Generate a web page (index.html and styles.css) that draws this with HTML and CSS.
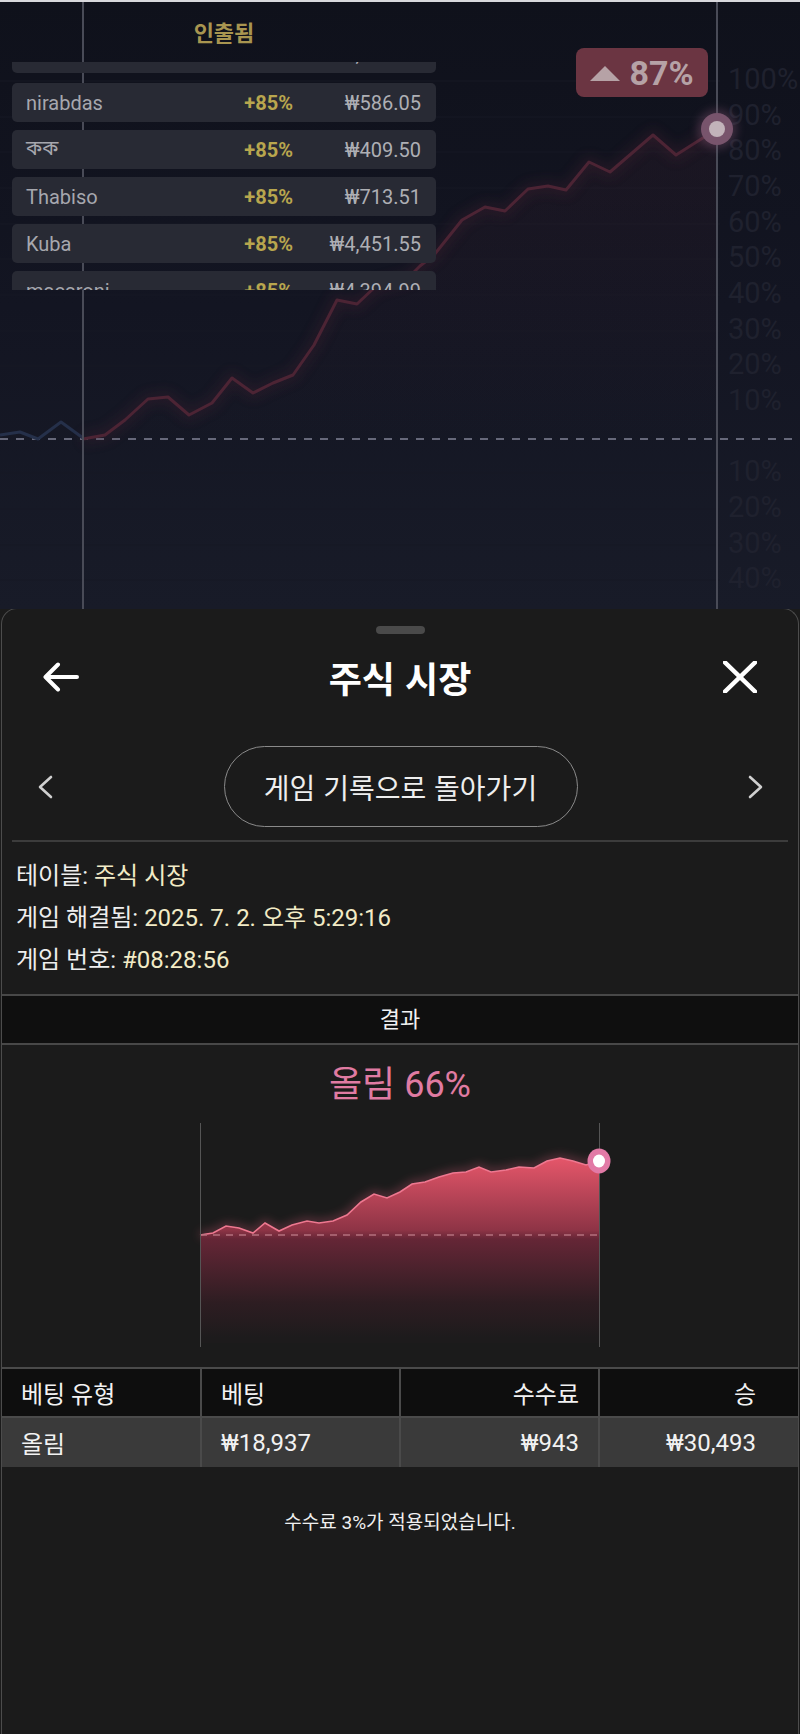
FILE: index.html
```html
<!DOCTYPE html>
<html lang="ko">
<head>
<meta charset="utf-8">
<title>주식 시장</title>
<link rel="stylesheet" href="styles.css">
</head>
<body>
<div class="game">
  <svg class="game-chart" viewBox="0 2 800 607" width="800" height="607">
    <defs>
      <filter id="blur6" x="-20%" y="-20%" width="140%" height="140%"><feGaussianBlur stdDeviation="6"/></filter>
      <filter id="blur3" x="-50%" y="-50%" width="200%" height="200%"><feGaussianBlur stdDeviation="4"/></filter>
      <linearGradient id="bgfill" x1="0" y1="129" x2="0" y2="439" gradientUnits="userSpaceOnUse">
        <stop offset="0" stop-color="#5a2a3a" stop-opacity="0.14"/>
        <stop offset="1" stop-color="#5a2a3a" stop-opacity="0"/>
      </linearGradient>
    </defs>
    <g class="grid">
      <line x1="0" y1="81" x2="720" y2="81"/><line x1="0" y1="117" x2="720" y2="117"/>
      <line x1="0" y1="152" x2="720" y2="152"/><line x1="0" y1="188" x2="720" y2="188"/>
      <line x1="0" y1="224" x2="720" y2="224"/><line x1="0" y1="259" x2="720" y2="259"/>
      <line x1="0" y1="295" x2="720" y2="295"/><line x1="0" y1="331" x2="720" y2="331"/>
      <line x1="0" y1="366" x2="720" y2="366"/><line x1="0" y1="402" x2="720" y2="402"/>
      <line x1="0" y1="473" x2="720" y2="473"/><line x1="0" y1="509" x2="720" y2="509"/>
      <line x1="0" y1="545" x2="720" y2="545"/><line x1="0" y1="580" x2="720" y2="580"/>
    </g>
    <g class="axis">
      <text x="728" y="81">100%</text><text x="728" y="117">90%</text>
      <text x="728" y="152">80%</text><text x="728" y="188">70%</text>
      <text x="728" y="224">60%</text><text x="728" y="259">50%</text>
      <text x="728" y="295">40%</text><text x="728" y="331">30%</text>
      <text x="728" y="366">20%</text><text x="728" y="402">10%</text>
      <text x="728" y="473">10%</text><text x="728" y="509">20%</text>
      <text x="728" y="545">30%</text><text x="728" y="580">40%</text>
    </g>
    <polygon fill="url(#bgfill)" points="83,439 105,435 125,420 148,399 168,397 189,415 212,403 232,378 253,393 273,383 293,375 314,345 337,300 357,304 375,287 408,278 420,266 434,255 462,220 485,207 505,211 528,189 548,186 566,190 589,162 610,172 653,135 676,155 717,129 717,439"/>
    <line class="zero" x1="0" y1="439" x2="800" y2="439"/>
    <polyline class="pre-line" points="0,435 20,432 38,439 61,422 83,438"/>
    <polyline class="up-glow" filter="url(#blur6)" points="83,439 105,435 125,420 148,399 168,397 189,415 212,403 232,378 253,393 273,383 293,375 314,345 337,300 357,304 375,287 408,278 420,266 434,255 462,220 485,207 505,211 528,189 548,186 566,190 589,162 610,172 653,135 676,155 717,129"/>
    <polyline class="up-line" points="83,439 105,435 125,420 148,399 168,397 189,415 212,403 232,378 253,393 273,383 293,375 314,345 337,300 357,304 375,287 408,278 420,266 434,255 462,220 485,207 505,211 528,189 548,186 566,190 589,162 610,172 653,135 676,155 717,129"/>
    <line class="vline" x1="83" y1="2" x2="83" y2="609"/>
    <line class="vline" x1="717" y1="2" x2="717" y2="609"/>
    <circle cx="717" cy="129" r="20" fill="#8a5a78" opacity="0.35" filter="url(#blur3)"/>
    <circle cx="717" cy="129" r="16" fill="#78546c"/>
    <circle cx="717" cy="129" r="8" fill="#c2b3ba"/>
  </svg>

  <div class="cashout">
    <div class="cashout-title">인출됨</div>
    <div class="cashout-clip">
      <ul class="cashout-list">
        <li class="row"><span class="name">Jin</span><span class="mult">+85%</span><span class="amt">₩1,204.30</span></li>
        <li class="row"><span class="name">nirabdas</span><span class="mult">+85%</span><span class="amt">₩586.05</span></li>
        <li class="row"><span class="name bn">কক</span><span class="mult">+85%</span><span class="amt">₩409.50</span></li>
        <li class="row"><span class="name">Thabiso</span><span class="mult">+85%</span><span class="amt">₩713.51</span></li>
        <li class="row"><span class="name">Kuba</span><span class="mult">+85%</span><span class="amt">₩4,451.55</span></li>
        <li class="row"><span class="name">macaroni</span><span class="mult">+85%</span><span class="amt">₩4,394.99</span></li>
      </ul>
    </div>
  </div>

  <div class="badge">
    <svg class="badge-tri" width="30" height="15" viewBox="0 0 30 15"><polygon points="0,15 30,15 15,0" fill="#b6a2a6"/></svg>
    <span>87%</span>
  </div>
</div>

<div class="sheet">
  <div class="handle"></div>
  <div class="sheet-header">
    <svg class="icon-back" width="36" height="30" viewBox="0 0 36 30"><path d="M34 15 H3 M15 2.5 L2.5 15 L15 27.5" fill="none" stroke="#fff" stroke-width="4" stroke-linecap="round" stroke-linejoin="round"/></svg>
    <h1 class="sheet-title">주식 시장</h1>
    <svg class="icon-close" width="34" height="32" viewBox="0 0 34 32"><path d="M2 1.5 L32 30.5 M32 1.5 L2 30.5" fill="none" stroke="#fff" stroke-width="4.5" stroke-linecap="round"/></svg>
  </div>
  <div class="nav-row">
    <svg class="chev chev-left" width="16" height="24" viewBox="0 0 16 24"><path d="M14 2 L3 12 L14 22" fill="none" stroke="#d0d0d0" stroke-width="2.6" stroke-linecap="round" stroke-linejoin="round"/></svg>
    <button class="pill">게임 기록으로 돌아가기</button>
    <svg class="chev chev-right" width="16" height="24" viewBox="0 0 16 24"><path d="M2 2 L13 12 L2 22" fill="none" stroke="#d0d0d0" stroke-width="2.6" stroke-linecap="round" stroke-linejoin="round"/></svg>
  </div>
  <div class="divider"></div>
  <div class="info">
    <p>테이블: <span class="val">주식 시장</span></p>
    <p>게임 해결됨: <span class="val">2025. 7. 2. 오후 5:29:16</span></p>
    <p>게임 번호: <span class="val">#08:28:56</span></p>
  </div>
  <div class="result-head">결과</div>
  <div class="result-body">
    <div class="result-title">올림 66%</div>
    <svg class="result-chart" width="400" height="224" viewBox="0 0 400 224">
      <defs>
        <linearGradient id="area" x1="0" y1="35" x2="0" y2="215" gradientUnits="userSpaceOnUse">
          <stop offset="0" stop-color="#e5566a"/>
          <stop offset="0.4" stop-color="#8e3446"/>
          <stop offset="0.45" stop-color="#652636"/>
          <stop offset="0.8" stop-color="#2e1d22"/>
          <stop offset="1" stop-color="#1d1b1c"/>
        </linearGradient>
        <filter id="mglow" x="-20%" y="-50%" width="140%" height="200%"><feGaussianBlur stdDeviation="5"/></filter>
      </defs>
      <polyline filter="url(#mglow)" fill="none" stroke="#e0607e" stroke-width="5" opacity="0.45" points="0,112 13,110 26,103 39,105 53,110 65,100 79,108 92,102 107,98 119,100 133,98 147,92 161,79 174,71 187,75 200,69 212,61 225,59 239,54 253,50 266,49 279,44 291,49 306,47 319,44 334,45 347,38 360,35 373,38 386,42 399,38"/>
      <polygon fill="url(#area)" points="0,112 13,110 26,103 39,105 53,110 65,100 79,108 92,102 107,98 119,100 133,98 147,92 161,79 174,71 187,75 200,69 212,61 225,59 239,54 253,50 266,49 279,44 291,49 306,47 319,44 334,45 347,38 360,35 373,38 386,42 399,38 399,220 0,220"/>
      <polyline fill="none" stroke="#ee7890" stroke-width="1.6" points="0,112 13,110 26,103 39,105 53,110 65,100 79,108 92,102 107,98 119,100 133,98 147,92 161,79 174,71 187,75 200,69 212,61 225,59 239,54 253,50 266,49 279,44 291,49 306,47 319,44 334,45 347,38 360,35 373,38 386,42 399,38"/>
      <line x1="0" y1="112" x2="399" y2="112" stroke="#b4707e" stroke-width="1.5" stroke-dasharray="7 6"/>
      <line x1="0.5" y1="0" x2="0.5" y2="224" stroke="#555" stroke-width="1"/>
      <line x1="399.5" y1="0" x2="399.5" y2="224" stroke="#555" stroke-width="1"/>
      <ellipse cx="399" cy="38" rx="11.5" ry="12.5" fill="#e27aa6"/>
      <ellipse cx="399" cy="38" rx="6" ry="6.5" fill="#ffffff"/>
    </svg>
  </div>
  <table class="bets">
    <thead>
      <tr><th class="l">베팅 유형</th><th class="l">베팅</th><th class="r">수수료</th><th class="r last">승</th></tr>
    </thead>
    <tbody>
      <tr><td class="l">올림</td><td class="l">₩18,937</td><td class="r">₩943</td><td class="r last">₩30,493</td></tr>
    </tbody>
  </table>
  <p class="note">수수료 3%가 적용되었습니다.</p>
</div>
</body>
</html>
```
FILE: styles.css
```css
* { box-sizing: border-box; }
html, body { margin: 0; padding: 0; }
body {
  width: 800px;
  height: 1734px;
  overflow: hidden;
  background: #1b1b1b;
  font-family: Roboto, "Noto Sans CJK KR", sans-serif;
  color: #eeeeee;
}

/* ---------- game background (dimmed) ---------- */
.game {
  position: relative;
  height: 609px;
  border-top: 2px solid #d8d8dc;
  background: linear-gradient(180deg, #0f111b 0%, #131522 50%, #181b28 100%);
  overflow: hidden;
}
.game-chart { position: absolute; left: 0; top: 0; display: block; }
.grid line { stroke: #161825; stroke-width: 1; }
.axis text {
  font-family: Roboto, "Liberation Sans", sans-serif;
  font-size: 29px;
  fill: #1f212e;
  dominant-baseline: middle;
}
.zero { stroke: #66687a; stroke-width: 2; stroke-dasharray: 8 8; }
.pre-line { fill: none; stroke: #25304a; stroke-width: 3; stroke-linejoin: round; }
.up-line { fill: none; stroke: #4c2434; stroke-width: 3; stroke-linejoin: round; }
.up-glow { fill: none; stroke: #4a2032; stroke-width: 10; opacity: 0.35; }
.vline { stroke: #494b57; stroke-width: 2; }

.cashout {
  position: absolute;
  left: 12px;
  top: 14px;
  width: 424px;
  font-family: Roboto, "Liberation Sans", sans-serif;
}
.cashout-title {
  text-align: center;
  font-family: "Noto Sans CJK KR", sans-serif;
  font-weight: 700;
  font-size: 22px;
  line-height: 30px;
  color: #a89550;
}
.cashout-clip {
  margin-top: 16px;
  height: 228px;
  overflow: hidden;
}
.cashout-list {
  list-style: none;
  margin: -28px 0 0;
  padding: 0;
  display: flex;
  flex-direction: column;
  gap: 8px;
}
.row {
  height: 39px;
  border-radius: 5px;
  background: #282a34;
  display: grid;
  grid-template-columns: 1fr 90px 128px;
  align-items: center;
  padding: 0 15px 0 14px;
  font-size: 20px;
}
.row:first-child { margin-bottom: 2px; }
.name { color: #a6a7ae; }
.bn { font-family: "Noto Sans Bengali", "Noto Sans", "DejaVu Sans", sans-serif; }
.mult { color: #b8a64e; font-weight: 700; text-align: right; }
.amt { color: #aeafb4; text-align: right; }

.badge {
  position: absolute;
  left: 576px;
  top: 46px;
  width: 132px;
  height: 49px;
  border-radius: 8px;
  background: #6b3542;
  display: flex;
  align-items: center;
  justify-content: center;
  gap: 9px;
  color: #b6a2a6;
  font-family: Roboto, "Liberation Sans", sans-serif;
  font-weight: 700;
  font-size: 34px;
}
.badge-tri { display: block; margin-top: 2px; }

/* ---------- bottom sheet ---------- */
.sheet {
  margin: -1px 1px 0;
  height: 1126px;
  border: 1px solid #4c4c4c;
  border-bottom: none;
  border-radius: 16px 16px 0 0;
  background: #1b1b1b;
}
.handle {
  width: 49px;
  height: 8px;
  border-radius: 4px;
  background: #4a4a4a;
  margin: 17px auto 0;
}
.sheet-header {
  margin-top: 13px;
  height: 60px;
  display: grid;
  grid-template-columns: 1fr auto 1fr;
  align-items: center;
  padding: 0 41px 0 41px;
}
.icon-back { display: block; justify-self: start; }
.icon-close { display: block; justify-self: end; }
.sheet-title {
  margin: 0;
  font-family: "Noto Sans CJK KR", sans-serif;
  font-size: 36px;
  font-weight: 700;
  color: #ffffff;
  line-height: 60px;
}
.nav-row {
  margin-top: 39px;
  height: 81px;
  display: grid;
  grid-template-columns: 1fr auto 1fr;
  align-items: center;
  padding: 0 34px 0 35px;
}
.chev { display: block; }
.chev-left { justify-self: start; }
.chev-right { justify-self: end; }
.pill {
  width: 354px;
  height: 81px;
  border-radius: 41px;
  border: 1.5px solid #8a8a8a;
  background: transparent;
  color: #eeeeee;
  font-family: "Noto Sans CJK KR", sans-serif;
  font-size: 28px;
  padding: 0;
}
.divider {
  margin: 13px 10px 0;
  height: 2px;
  background: #3c3c3c;
}
.info {
  padding: 13px 14px;
}
.info p {
  margin: 0;
  font-size: 24px;
  line-height: 42px;
  color: #eeeeee;
}
.val { color: #f2ebc6; }

.result-head {
  height: 51px;
  border-top: 2px solid #484848;
  border-bottom: 2px solid #484848;
  background: #0f0f0f;
  text-align: center;
  font-size: 22px;
  line-height: 47px;
  color: #f2f2f2;
}
.result-body {
  padding-top: 20px;
}
.result-title {
  text-align: center;
  font-size: 36px;
  line-height: 40px;
  color: #e07ba2;
}
.result-chart {
  display: block;
  margin: 18px auto 0;
  overflow: visible;
}

.bets {
  margin-top: 20px;
  width: 100%;
  border-collapse: collapse;
  table-layout: fixed;
  font-size: 24px;
}
.bets th, .bets td {
  border: 2px solid #4a4a4a;
  font-weight: 400;
  height: 49px;
  padding: 0 19px;
  color: #f2f2f2;
}
.bets th { background: #0e0e0e; }
.bets td { background: #3a3a3a; height: 50px; border-bottom: none; }
.bets tr > :first-child { border-left: none; }
.bets tr > :last-child { border-right: none; }
.bets .l { text-align: left; }
.bets .r { text-align: right; }
.bets .last { padding-right: 42px; }

.note {
  margin: 44px 0 0;
  text-align: center;
  font-size: 19px;
  line-height: 24px;
  color: #f0f0f0;
}
```
